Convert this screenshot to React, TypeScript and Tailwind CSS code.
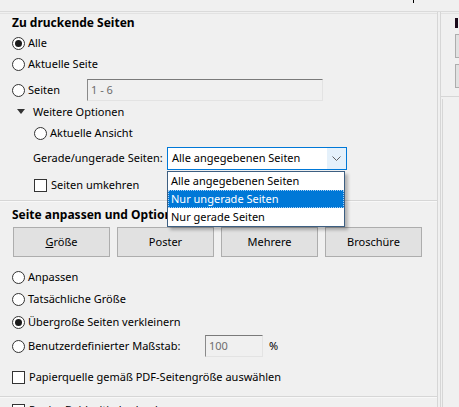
import React from 'react';

const font = { fontFamily: '"Noto Sans", "Open Sans", sans-serif' };

const Radio: React.FC<{ checked?: boolean; label: string }> = ({ checked, label }) => (
  <div className="flex items-center">
    <span className="flex h-[13px] w-[13px] items-center justify-center rounded-full border border-[#333333] bg-white">
      {checked && <span className="h-[7px] w-[7px] rounded-full bg-[#1a1a1a]" />}
    </span>
    <span className="ml-[3px] whitespace-nowrap">{label}</span>
  </div>
);

const Check: React.FC<{ label: string }> = ({ label }) => (
  <div className="flex items-center">
    <span className="h-[13px] w-[13px] border border-[#333333] bg-white" />
    <span className="ml-[4px] whitespace-nowrap">{label}</span>
  </div>
);

const Field: React.FC<{ value: string; className: string }> = ({ value, className }) => (
  <div
    className={`flex items-center border-t border-l border-t-[#7a7a7a] border-l-[#8a8a8a] border-r border-b border-r-[#e3e3e3] border-b-[#e3e3e3] bg-[#f0f0f0] pl-[3px] text-[#6d6d6d] ${className}`}
  >
    {value}
  </div>
);

const PushButton: React.FC<{ children: React.ReactNode }> = ({ children }) => (
  <button className="flex h-[30px] w-[97px] items-center justify-center border border-[#adadad] bg-[#e1e1e1] text-black">
    {children}
  </button>
);

export default function App() {
  return (
    <div className="h-[407px] w-[459px] overflow-hidden bg-[#f0f0f0] text-[11px] text-black" style={font}>
      {/* Streifen oben */}
      <div className="flex h-[11px]">
        <div className="ml-[413px] h-[3px] w-[1px] bg-black" />
      </div>
      <div className="h-[1px] bg-[#dadada]" />
      <div className="flex h-[395px]">
        {/* Linkes Panel */}
        <div className="relative w-[438px] border-r border-[#d6d6d6]">
          <div className="mt-[1px] h-[1px] bg-[#e2e2e2]" />
          <div className="pl-[12px]">
            <div className="flex h-[17px] items-center text-[12px] font-bold">Zu druckende Seiten</div>
            <div className="mt-[2px] flex h-[21px] items-center">
              <Radio checked label="Alle" />
            </div>
            <div className="flex h-[21px] items-center">
              <Radio label="Aktuelle Seite" />
            </div>
            <div className="mt-[4px] flex h-[22px] items-center">
              <div className="w-[75px]">
                <Radio label="Seiten" />
              </div>
              <Field value="1 - 6" className="h-[22px] w-[236px]" />
            </div>
            <div className="flex h-[22px] items-center pl-[5px]">
              <svg width="8" height="6" viewBox="0 0 8 6" className="mr-[8px]">
                <path d="M0 0 L8 0 L4 5 Z" fill="#333" />
              </svg>
              Weitere Optionen
            </div>
            <div className="flex h-[21px] items-center pl-[22px]">
              <Radio label="Aktuelle Ansicht" />
            </div>
            <div className="mt-[3px] flex h-[23px] items-center pl-[21px]">
              <div className="w-[134px] whitespace-nowrap">Gerade/ungerade Seiten:</div>
              <div className="flex h-[23px] w-[180px] items-center border border-[#0078d7] bg-white">
                <span className="flex-1 pl-[4px]">Alle angegebenen Seiten</span>
                <span className="flex h-full w-[19px] items-center justify-center bg-[#e5f1fb]">
                  <svg width="9" height="5" viewBox="0 0 9 5">
                    <path d="M0.5 0.5 L4.5 4.5 L8.5 0.5" fill="none" stroke="#606060" strokeWidth="1" />
                  </svg>
                </span>
              </div>
            </div>
            <div className="mt-[4px] flex h-[22px] items-center pl-[22px]">
              <Check label="Seiten umkehren" />
            </div>
          </div>
          <div className="mt-[4px] h-[1px] bg-[#d6d6d6]" />
          <div className="h-[1px] bg-[#f8f8f8]" />
          <div className="pl-[12px]">
            <div className="mt-[4px] flex h-[17px] items-center whitespace-nowrap text-[12px] font-bold">
              Seite anpassen und Optionen
            </div>
            <div className="mt-[4px] flex gap-[7px] pl-[1px]">
              <PushButton>
                <span>
                  <span className="underline">G</span>röße
                </span>
              </PushButton>
              <PushButton>Poster</PushButton>
              <PushButton>Mehrere</PushButton>
              <PushButton>Broschüre</PushButton>
            </div>
            <div className="mt-[10px] flex h-[21px] items-center">
              <Radio label="Anpassen" />
            </div>
            <div className="mt-[1px] flex h-[21px] items-center">
              <Radio label="Tatsächliche Größe" />
            </div>
            <div className="mt-[2px] flex h-[21px] items-center">
              <Radio checked label="Übergroße Seiten verkleinern" />
            </div>
            <div className="mt-[2px] flex h-[22px] items-center">
              <div className="w-[193px]">
                <Radio label="Benutzerdefinierter Maßstab:" />
              </div>
              <Field value="100" className="h-[22px] w-[58px]" />
              <span className="ml-[6px]">%</span>
            </div>
            <div className="mt-[10px] flex h-[21px] items-center">
              <Check label="Papierquelle gemäß PDF-Seitengröße auswählen" />
            </div>
          </div>
          <div className="mt-[8px] h-[1px] bg-[#d6d6d6]" />
          <div className="h-[1px] bg-[#f8f8f8]" />
          <div className="pl-[12px] pt-[4px]">
            <Check label="Papier Beidseitig bedrucken" />
          </div>

          {/* Aufgeklappte Liste */}
          <div className="absolute left-[167px] top-[159px] w-[178px] border border-[#3d5f82] bg-white shadow-[3px_3px_3px_rgba(0,0,0,0.25)]">
            <div className="flex h-[18px] items-center pl-[3px]">Alle angegebenen Seiten</div>
            <div className="flex h-[18px] items-center border border-dotted border-[#a8d0f5] bg-[#0078d7] pl-[2px] text-white">
              Nur ungerade Seiten
            </div>
            <div className="flex h-[18px] items-center pl-[3px]">Nur gerade Seiten</div>
          </div>
        </div>

        {/* Rechtes Panel (angeschnitten) */}
        <div className="ml-[2px] flex-1 border-l border-[#d6d6d6]">
          <div className="mt-[1px] h-[1px] bg-[#e2e2e2]" />
          <div className="ml-[14px] mt-[4px] h-[10px] w-[3px] bg-[#1a0a1a]" />
          <div className="ml-[14px] mt-[6px] h-[24px] border-y border-l border-[#adadad] bg-[#e1e1e1]" />
          <div className="ml-[14px] mt-[6px] h-[24px] border-y border-l border-[#adadad] bg-[#e1e1e1]" />
          <div className="mt-[8px] h-[1px] bg-[#d6d6d6]" />
          <div className="mt-[2px] ml-[1px] h-full border-l border-[#d6d6d6]" />
        </div>
      </div>
    </div>
  );
}
